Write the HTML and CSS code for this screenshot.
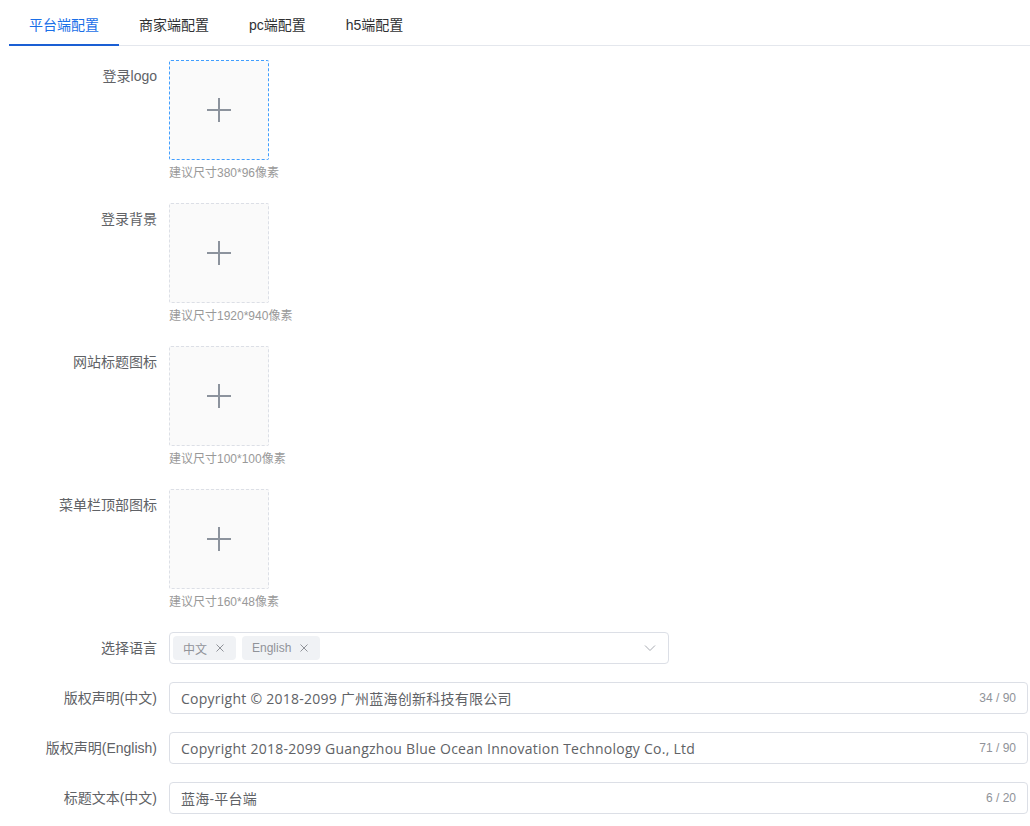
FILE: index.html
```html
<!DOCTYPE html>
<html lang="zh-CN">
<head>
    <meta charset="UTF-8">
    <meta name="viewport" content="width=device-width, initial-scale=1.0">
    <title>系统配置</title>
    <link rel="stylesheet" href="styles.css">
</head>
<body>
    <div class="page">
        <div class="tabs">
            <div class="tab active">平台端配置</div>
            <div class="tab">商家端配置</div>
            <div class="tab">pc端配置</div>
            <div class="tab">h5端配置</div>
        </div>

        <form class="form">
            <div class="form-item">
                <label class="form-label">登录logo</label>
                <div class="form-content">
                    <div class="uploader focus">
                        <svg class="plus" viewBox="0 0 28 28"><path d="M14 2v24M2 14h24" stroke="#8c939d" stroke-width="2"/></svg>
                    </div>
                    <div class="hint">建议尺寸380*96像素</div>
                </div>
            </div>

            <div class="form-item">
                <label class="form-label">登录背景</label>
                <div class="form-content">
                    <div class="uploader">
                        <svg class="plus" viewBox="0 0 28 28"><path d="M14 2v24M2 14h24" stroke="#8c939d" stroke-width="2"/></svg>
                    </div>
                    <div class="hint">建议尺寸1920*940像素</div>
                </div>
            </div>

            <div class="form-item">
                <label class="form-label">网站标题图标</label>
                <div class="form-content">
                    <div class="uploader">
                        <svg class="plus" viewBox="0 0 28 28"><path d="M14 2v24M2 14h24" stroke="#8c939d" stroke-width="2"/></svg>
                    </div>
                    <div class="hint">建议尺寸100*100像素</div>
                </div>
            </div>

            <div class="form-item">
                <label class="form-label">菜单栏顶部图标</label>
                <div class="form-content">
                    <div class="uploader">
                        <svg class="plus" viewBox="0 0 28 28"><path d="M14 2v24M2 14h24" stroke="#8c939d" stroke-width="2"/></svg>
                    </div>
                    <div class="hint">建议尺寸160*48像素</div>
                </div>
            </div>

            <div class="form-item">
                <label class="form-label">选择语言</label>
                <div class="form-content">
                    <div class="select">
                        <span class="tag">中文<svg class="tag-close" viewBox="0 0 12 12"><path d="M2.5 2.5l7 7M9.5 2.5l-7 7" stroke="#909399" stroke-width="1"/></svg></span>
                        <span class="tag">English<svg class="tag-close" viewBox="0 0 12 12"><path d="M2.5 2.5l7 7M9.5 2.5l-7 7" stroke="#909399" stroke-width="1"/></svg></span>
                        <svg class="arrow" viewBox="0 0 12 8"><path d="M1 1.5l5 5 5-5" fill="none" stroke="#a8abb2" stroke-width="1"/></svg>
                    </div>
                </div>
            </div>

            <div class="form-item">
                <label class="form-label">版权声明(中文)</label>
                <div class="form-content">
                    <div class="input">
                        <span class="input-text">Copyright © 2018-2099 广州蓝海创新科技有限公司</span>
                        <span class="count">34 / 90</span>
                    </div>
                </div>
            </div>

            <div class="form-item">
                <label class="form-label">版权声明(English)</label>
                <div class="form-content">
                    <div class="input">
                        <span class="input-text">Copyright 2018-2099 Guangzhou Blue Ocean Innovation Technology Co., Ltd</span>
                        <span class="count">71 / 90</span>
                    </div>
                </div>
            </div>

            <div class="form-item">
                <label class="form-label">标题文本(中文)</label>
                <div class="form-content">
                    <div class="input">
                        <span class="input-text">蓝海-平台端</span>
                        <span class="count">6 / 20</span>
                    </div>
                </div>
            </div>
        </form>
    </div>
</body>
</html>
```

FILE: styles.css
```css
body {
    margin: 0;
    padding: 0;
    background-color: #fff;
    font-family: "Liberation Sans", "Noto Sans CJK SC", sans-serif;
    font-size: 14px;
    color: #606266;
    overflow: hidden;
}
.page {
    padding: 5px 0 0 9px;
}
.tabs {
    display: flex;
    height: 40px;
    border-bottom: 1px solid #e4e7ed;
    margin-bottom: 14px;
}
.tab {
    padding: 0 20px;
    line-height: 40px;
    color: #303133;
    position: relative;
}
.tab.active {
    color: #1a6fe8;
}
.tab.active::after {
    content: "";
    position: absolute;
    left: 0;
    right: 0;
    bottom: -1px;
    height: 2px;
    background-color: #1a5fd4;
}
.form-item {
    display: flex;
    margin-bottom: 18px;
}
.form-label {
    width: 160px;
    flex-shrink: 0;
    box-sizing: border-box;
    padding-right: 12px;
    text-align: right;
    line-height: 32px;
}
.form-content {
    flex: 1;
}
.uploader {
    width: 100px;
    height: 100px;
    box-sizing: border-box;
    border: 1px dashed #dcdfe6;
    border-radius: 2px;
    background-color: #fafafa;
    display: flex;
    align-items: center;
    justify-content: center;
}
.uploader.focus {
    border-color: #409eff;
}
.plus {
    width: 28px;
    height: 28px;
}
.hint {
    font-size: 12px;
    color: #999;
    padding-top: 2px;
    line-height: 23px;
}
.select {
    width: 500px;
    height: 32px;
    box-sizing: border-box;
    border: 1px solid #dcdfe6;
    border-radius: 4px;
    display: flex;
    align-items: center;
    padding-left: 3px;
    gap: 6px;
}
.tag {
    display: inline-flex;
    align-items: center;
    height: 24px;
    padding: 0 10px;
    background-color: #f0f2f5;
    border-radius: 4px;
    font-size: 12px;
    color: #909399;
    gap: 7px;
}
.tag-close {
    width: 12px;
    height: 12px;
}
.arrow {
    width: 12px;
    height: 8px;
    margin-left: auto;
    margin-right: 12px;
}
.input {
    height: 32px;
    box-sizing: border-box;
    margin-right: 2px;
    border: 1px solid #dcdfe6;
    border-radius: 4px;
    display: flex;
    align-items: center;
    padding: 0 11px;
}
.input-text {
    flex: 1;
    white-space: nowrap;
    font-family: "Open Sans", "Noto Sans CJK SC", sans-serif;
    font-size: 14px;
    letter-spacing: 0.25px;
    color: #606266;
}
.count {
    font-size: 12px;
    color: #909399;
}
```
